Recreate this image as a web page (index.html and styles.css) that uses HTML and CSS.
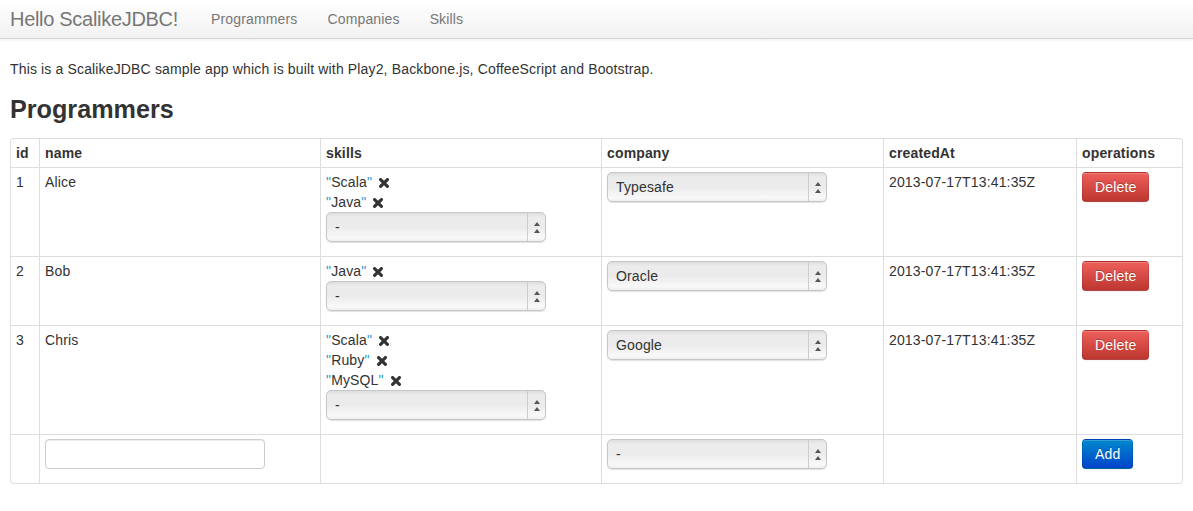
FILE: index.html
```html
<!DOCTYPE html>
<html lang="en">
<head>
    <meta charset="UTF-8">
    <title>Hello ScalikeJDBC!</title>
    <link rel="stylesheet" href="styles.css">
</head>
<body>
    <div class="navbar">
        <a class="brand" href="#">Hello ScalikeJDBC!</a>
        <ul class="nav">
            <li><a href="#">Programmers</a></li>
            <li><a href="#">Companies</a></li>
            <li><a href="#">Skills</a></li>
        </ul>
    </div>

    <div class="container">
        <p>This is a ScalikeJDBC sample app which is built with Play2, Backbone.js, CoffeeScript and Bootstrap.</p>
        <h3>Programmers</h3>

        <table class="table">
            <thead>
                <tr>
                    <th class="col-id">id</th>
                    <th class="col-name">name</th>
                    <th class="col-skills">skills</th>
                    <th class="col-company">company</th>
                    <th class="col-created">createdAt</th>
                    <th>operations</th>
                </tr>
            </thead>
            <tbody>
                <tr>
                    <td>1</td>
                    <td>Alice</td>
                    <td>
                        <div class="skill"><span class="q">"</span>Scala<span class="q">"</span> <svg class="remove" viewBox="0 0 10 10"><path d="M1.6 1.6L8.4 8.4M8.4 1.6L1.6 8.4"/></svg></div>
                        <div class="skill"><span class="q">"</span>Java<span class="q">"</span> <svg class="remove" viewBox="0 0 10 10"><path d="M1.6 1.6L8.4 8.4M8.4 1.6L1.6 8.4"/></svg></div>
                        <span class="select"><select><option>-</option></select></span>
                    </td>
                    <td><span class="select"><select><option>Typesafe</option></select></span></td>
                    <td>2013-07-17T13:41:35Z</td>
                    <td><button class="btn btn-danger">Delete</button></td>
                </tr>
                <tr>
                    <td>2</td>
                    <td>Bob</td>
                    <td>
                        <div class="skill"><span class="q">"</span>Java<span class="q">"</span> <svg class="remove" viewBox="0 0 10 10"><path d="M1.6 1.6L8.4 8.4M8.4 1.6L1.6 8.4"/></svg></div>
                        <span class="select"><select><option>-</option></select></span>
                    </td>
                    <td><span class="select"><select><option>Oracle</option></select></span></td>
                    <td>2013-07-17T13:41:35Z</td>
                    <td><button class="btn btn-danger">Delete</button></td>
                </tr>
                <tr>
                    <td>3</td>
                    <td>Chris</td>
                    <td>
                        <div class="skill"><span class="q">"</span>Scala<span class="q">"</span> <svg class="remove" viewBox="0 0 10 10"><path d="M1.6 1.6L8.4 8.4M8.4 1.6L1.6 8.4"/></svg></div>
                        <div class="skill"><span class="q">"</span>Ruby<span class="q">"</span> <svg class="remove" viewBox="0 0 10 10"><path d="M1.6 1.6L8.4 8.4M8.4 1.6L1.6 8.4"/></svg></div>
                        <div class="skill"><span class="q">"</span>MySQL<span class="q">"</span> <svg class="remove" viewBox="0 0 10 10"><path d="M1.6 1.6L8.4 8.4M8.4 1.6L1.6 8.4"/></svg></div>
                        <span class="select"><select><option>-</option></select></span>
                    </td>
                    <td><span class="select"><select><option>Google</option></select></span></td>
                    <td>2013-07-17T13:41:35Z</td>
                    <td><button class="btn btn-danger">Delete</button></td>
                </tr>
                <tr>
                    <td></td>
                    <td><input type="text" class="text-input"></td>
                    <td></td>
                    <td><span class="select"><select><option>-</option></select></span></td>
                    <td></td>
                    <td><button class="btn btn-primary">Add</button></td>
                </tr>
            </tbody>
        </table>
    </div>
</body>
</html>
```

FILE: styles.css
```css
* {
    box-sizing: border-box;
}
body {
    margin: 0;
    font-family: "Liberation Sans", Arial, sans-serif;
    font-size: 14px;
    line-height: 20px;
    letter-spacing: 0.15px;
    color: #333;
    background: #fff;
}
.navbar {
    display: flex;
    align-items: center;
    height: 39px;
    background: linear-gradient(to bottom, #ffffff, #f2f2f2);
    border-bottom: 1px solid #d4d4d4;
    box-shadow: 0 1px 4px rgba(0, 0, 0, 0.065);
}
.brand {
    padding: 9px 18px 9px 10px;
    font-size: 20px;
    line-height: 20px;
    letter-spacing: -0.3px;
    color: #777;
    text-decoration: none;
}
.nav {
    display: flex;
    margin: 0;
    padding: 0;
    list-style: none;
}
.nav a {
    display: block;
    padding: 9px 15px;
    color: #777;
    text-decoration: none;
}
.container {
    padding: 20px 10px 0;
}
p {
    margin: 0 0 10px;
}
h3 {
    margin: 10px 0 9px;
    font-size: 25.2px;
    line-height: 40px;
    font-weight: bold;
    letter-spacing: 0;
}
.table {
    width: 1173px;
    table-layout: fixed;
    border: 1px solid #ddd;
    border-left: 0;
    border-collapse: separate;
    border-spacing: 0;
    border-radius: 4px;
}
.table th,
.table td {
    padding: 4px 5px;
    line-height: 20px;
    text-align: left;
    vertical-align: top;
    border-left: 1px solid #ddd;
    border-top: 1px solid #ddd;
}
.table thead th {
    border-top: 0;
}
.table thead th:first-child {
    border-top-left-radius: 4px;
}
.table tbody tr:last-child td:first-child {
    border-bottom-left-radius: 4px;
}
.col-id { width: 29px; }
.col-name { width: 281px; }
.col-skills { width: 281px; }
.col-company { width: 282px; }
.col-created { width: 193px; }
.skill {
    height: 20px;
}
.q {
    color: #2f96d8;
}
.remove {
    width: 10px;
    height: 10px;
    margin-left: 3px;
    vertical-align: -1px;
}
.remove path {
    stroke: #333;
    stroke-width: 3.2;
    stroke-linecap: round;
    fill: none;
}
.select {
    position: relative;
    display: block;
    width: 220px;
    height: 30px;
    margin-bottom: 10px;
}
.select select {
    width: 220px;
    height: 30px;
    padding: 0 24px 0 8px;
    font-family: "Liberation Sans", Arial, sans-serif;
    font-size: 14px;
    letter-spacing: 0.15px;
    color: #333;
    -webkit-appearance: none;
    appearance: none;
    border: 1px solid #c6c6c6;
    border-radius: 5px;
    background: linear-gradient(to bottom, #dedede 0%, #ececec 15%, #ebebeb 50%, #f9f9f9 88%, #efefef 100%);
    box-shadow: 0 1px 1px rgba(0, 0, 0, 0.12);
}
.select::before {
    content: "";
    position: absolute;
    top: 1px;
    bottom: 1px;
    right: 18px;
    border-left: 1px solid #cdcdcd;
}
.select::after {
    content: "";
    position: absolute;
    top: 10px;
    right: 6px;
    width: 0;
    height: 0;
    border-left: 3.5px solid transparent;
    border-right: 3.5px solid transparent;
    border-bottom: 4px solid #555;
    filter: drop-shadow(0 7px 0 #555);
}
.text-input {
    display: block;
    width: 220px;
    height: 30px;
    margin-bottom: 10px;
    padding: 4px 6px;
    font-size: 14px;
    border: 1px solid #ccc;
    border-radius: 4px;
    box-shadow: inset 0 1px 1px rgba(0, 0, 0, 0.075);
}
.btn {
    display: inline-block;
    padding: 4px 12px;
    font-family: "Liberation Sans", Arial, sans-serif;
    font-size: 14px;
    line-height: 20px;
    letter-spacing: 0.15px;
    color: #fff;
    text-shadow: 0 -1px 0 rgba(0, 0, 0, 0.25);
    border: 1px solid;
    border-color: rgba(0, 0, 0, 0.1) rgba(0, 0, 0, 0.1) rgba(0, 0, 0, 0.25);
    border-radius: 4px;
    box-shadow: inset 0 1px 0 rgba(255, 255, 255, 0.2), 0 1px 2px rgba(0, 0, 0, 0.05);
    cursor: pointer;
}
.btn-danger {
    background: linear-gradient(to bottom, #ee5f5b, #bd362f);
}
.btn-primary {
    background: linear-gradient(to bottom, #0088cc, #0044cc);
}
```
